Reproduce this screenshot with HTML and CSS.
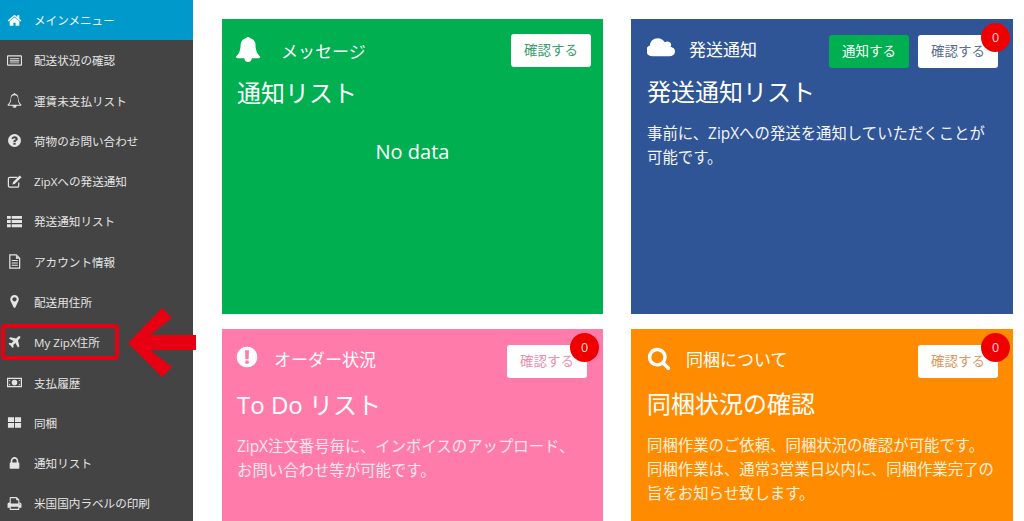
FILE: index.html
```html
<!DOCTYPE html>
<html lang="ja">
<head>
<meta charset="utf-8">
<title>ZipX</title>
<link rel="stylesheet" href="styles.css">
</head>
<body>
<div class="page">
<nav class="side">
  <a class="item active"><svg class="ic" viewBox="0 0 1792 1792"><path d="M1472 992v480q0 26-19 45t-45 19h-384v-384h-256v384h-384q-26 0-45-19t-19-45v-480q0-1 .5-3t.5-3l575-474 575 474q1 2 1 6zm223-69l-62 74q-8 9-21 11h-3q-13 0-21-7l-692-577-692 577q-12 8-24 7-13-2-21-11l-62-74q-8-10-7-23.500t11-21.500l719-599q32-26 76-26t76 26l244 204v-195q0-14 9-23t23-9h192q14 0 23 9t9 23v408l219 182q10 8 11 21.500t-7 23.500z"/></svg>メインメニュー</a>
  <a class="item"><svg class="ic" viewBox="0 0 16 16"><path fill-rule="evenodd" d="M1 2.500h14a1 1 0 0 1 1 1v9a1 1 0 0 1-1 1H1a1 1 0 0 1-1-1v-9a1 1 0 0 1 1-1zm.2 1.300v8.400h13.600V3.800zM3 5.500h10v1.200H3zM3 7.800h10V9H3zM3 10h10v1H3z"/></svg>配送状況の確認</a>
  <a class="item"><svg class="ic" viewBox="0 0 1792 1792"><path d="M912 1696q0-16-16-16-59 0-101.500-42.500t-42.500-101.500q0-16-16-16t-16 16q0 73 51.500 124.500t124.500 51.500q16 0 16-16zm-666-288h1300q-266-300-266-832 0-51-24-105t-69-103-121.500-80.500-169.500-31.500-169.500 31.500-121.500 80.500-69 103-24 105q0 532-266 832zm1482 0q0 52-38 90t-90 38h-448q0 106-75 181t-181 75-181-75-75-181h-448q-52 0-90-38t-38-90q190-161 287-397.500t97-498.500q0-165 96-262t264-117q-8-18-8-37 0-40 28-68t68-28 68 28 28 68q0 19-8 37 168 20 264 117t96 262q0 262 97 498.500t287 397.500z"/></svg>運賃未支払リスト</a>
  <a class="item"><svg class="ic" viewBox="0 0 1792 1792"><path d="M1024 1376v-192q0-14-9-23t-23-9h-192q-14 0-23 9t-9 23v192q0 14 9 23t23 9h192q14 0 23-9t9-23zm256-672q0-88-55.500-163t-138.500-116-170-41q-243 0-371 213-15 24 8 42l132 100q7 6 19 6 16 0 25-12 53-68 86-92 34-24 86-24 48 0 85.500 26t37.500 59q0 38-20 61t-68 45q-63 28-115.500 86.500t-52.500 125.500v36q0 14 9 23t23 9h192q14 0 23-9t9-23q0-19 21.500-49.500t54.500-49.500q32-18 49-28.500t46-35 44.500-48 28-60.500 12.500-81zm384 192q0 209-103 385.500t-279.500 279.500-385.500 103-385.500-103-279.500-279.500-103-385.500 103-385.500 279.500-279.500 385.500-103 385.500 103 279.500 279.500 103 385.500z"/></svg>荷物のお問い合わせ</a>
  <a class="item"><svg class="ic" viewBox="0 0 16 16"><path d="M11 3.500H3a1.500 1.500 0 0 0-1.500 1.500v7.500A1.500 1.500 0 0 0 3 14h8a1.500 1.500 0 0 0 1.500-1.500V9" fill="none" stroke="currentColor" stroke-width="1.300"/><path d="M13.500 1.500l2 2-7 7-2.800.800.800-2.800z"/></svg>ZipXへの発送通知</a>
  <a class="item"><svg class="ic" viewBox="0 0 16 16"><path d="M0 2h4v3H0zM5 2h11v3H5zM0 6.500h4v3H0zM5 6.500h11v3H5zM0 11h4v3H0zM5 11h11v3H5z"/></svg>発送通知リスト</a>
  <a class="item"><svg class="ic" viewBox="0 0 16 16"><path d="M3 1h7l3.500 3.500V15H3z" fill="none" stroke="currentColor" stroke-width="1.300"/><path d="M5 6.500h6.500v1H5zM5 9h6.500v1H5zM5 11.500h6.500v1H5zM9.500 1.500v3.500h3.500" fill="currentColor"/></svg>アカウント情報</a>
  <a class="item"><svg class="ic" viewBox="0 0 1792 1792"><path d="M1152 640q0-106-75-181t-181-75-181 75-75 181 75 181 181 75 181-75 75-181zm256 0q0 109-33 179l-364 774q-16 33-47.500 52t-67.500 19-67.500-19-46.500-52l-365-774q-33-70-33-179 0-212 150-362t362-150 362 150 150 362z"/></svg>配送用住所</a>
  <a class="item"><svg class="ic" viewBox="0 0 1408 1792"><path d="M1376 160q44 52 12 148t-108 172l-161 161 160 696q5 19-12 33l-128 96q-7 6-19 6-4 0-7-1-15-3-21-16l-279-508-259 259 53 194q5 17-8 31l-96 96q-9 9-23 9h-2q-15-2-24-13l-189-252-252-189q-11-7-13-23-1-13 9-25l96-97q9-9 23-9 6 0 8 1l194 53 259-259-508-279q-14-8-17-24-2-16 9-27l128-128q14-13 30-8l665 159 160-160q76-76 172-108t148 12z"/></svg>My ZipX住所</a>
  <a class="item"><svg class="ic" viewBox="0 0 16 16"><path fill-rule="evenodd" d="M0 3h16v10H0zm1.300 1.300v7.400h13.400V4.300zM8 5a3 3 0 1 1 0 6 3 3 0 0 1 0-6zM2.200 5.200h1.800L2.200 7zM13.800 5.200h-1.800L13.800 7zM2.200 10.800h1.800L2.200 9zM13.800 10.800h-1.800L13.800 9z"/></svg>支払履歴</a>
  <a class="item"><svg class="ic" viewBox="0 0 16 16"><path d="M1 2.500h6.500v5H1zM8.500 2.500H15v5H8.500zM1 8.500h6.500v5H1zM8.500 8.500H15v5H8.500z"/></svg>同梱</a>
  <a class="item"><svg class="ic" viewBox="0 0 1792 1792"><path d="M640 768h512v-192q0-106-75-181t-181-75-181 75-75 181v192zm832 96v576q0 40-28 68t-68 28h-960q-40 0-68-28t-28-68v-576q0-40 28-68t68-28h32v-192q0-184 132-316t316-132 316 132 132 316v192h32q40 0 68 28t28 68z"/></svg>通知リスト</a>
  <a class="item"><svg class="ic" viewBox="0 0 1792 1792"><path d="M448 1536h896v-256h-896v256zm0-640h896v-384h-160q-40 0-68-28t-28-68v-160h-640v640zm1152 64q0-26-19-45t-45-19-45 19-19 45 19 45 45 19 45-19 19-45zm128 0v416q0 13-9.500 22.500t-22.500 9.500h-224v160q0 40-28 68t-68 28h-960q-40 0-68-28t-28-68v-160h-224q-13 0-22.500-9.500t-9.500-22.500v-416q0-79 56.500-135.500t135.500-56.500h64v-544q0-40 28-68t68-28h672q40 0 88 20t76 48l152 152q28 28 48 76t20 88v256h64q79 0 135.500 56.500t56.500 135.500z"/></svg>米国国内ラベルの印刷</a>
</nav>
<main class="grid">
  <section class="card green">
    <header class="head">
      <svg class="big bell" viewBox="0 0 1792 1792"><path d="M1664 1344q0 52-38 90t-90 38h-448q0 106-75 181t-181 75-181-75-75-181h-448q-52 0-90-38t-38-90q50-42 91-88t85-119.500 74.500-158.500 50-206 19.500-260q0-152 117-282.500t307-158.500q-8-19-8-39 0-40 28-68t68-28 68 28 28 68q0 20-8 39 190 28 307 158.500t117 282.500q0 139 19.500 260t50 206 74.500 158.500 85 119.500 91 88z"/></svg>
      <span class="label l-msg">メッセージ</span>
      <div class="btns"><a class="btn t-green">確認する</a></div>
    </header>
    <h2 class="title t-msg">通知リスト</h2>
    <p class="nodata">No data</p>
  </section>
  <section class="card blue">
    <header class="head">
      <svg class="big cloud" viewBox="0 0 1920 1792" preserveAspectRatio="none"><path d="M1856 1280q0 159-112.500 271.500t-271.500 112.500h-1088q-185 0-316.500-131.500t-131.500-316.500q0-132 71-241.500t187-163.500q-2-28-2-43 0-212 150-362t362-150q158 0 286.500 88t187.500 230q70-62 166-62 106 0 181 75t75 181q0 75-41 138 129 30 213 134.500t84 239.500z"/></svg>
      <span class="label l-ship">発送通知</span>
      <div class="btns"><a class="btn solid">通知する</a><a class="btn t-blue">確認する<b class="badge">0</b></a></div>
    </header>
    <h2 class="title">発送通知リスト</h2>
    <p class="desc">事前に、ZipXへの発送を通知していただくことが<br>可能です。</p>
  </section>
  <section class="card pink">
    <header class="head">
      <svg class="big excl" viewBox="0 0 1792 1792"><path d="M896 128q209 0 385.500 103t279.500 279.500 103 385.500-103 385.500-279.500 279.500-385.500 103-385.500-103-279.500-279.500-103-385.500 103-385.500 279.500-279.500 385.500-103zm128 1247v-190q0-14-9-23.500t-22-9.500h-192q-13 0-23 10t-10 23v190q0 13 10 23t23 10h192q13 0 22-9.500t9-23.500zm-2-344l18-621q0-12-10-18-10-8-24-8h-220q-14 0-24 8-10 6-10 18l17 621q0 10 10 17.500t24 7.500h185q14 0 23.500-7.500t10.500-17.500z"/></svg>
      <span class="label l-order">オーダー状況</span>
      <div class="btns"><a class="btn t-pink">確認する<b class="badge">0</b></a></div>
    </header>
    <h2 class="title">To Do リスト</h2>
    <p class="desc">ZipX注文番号毎に、インボイスのアップロード、<br>お問い合わせ等が可能です。</p>
  </section>
  <section class="card orange">
    <header class="head">
      <svg class="big search" viewBox="0 0 1792 1792"><path d="M1216 832q0-185-131.500-316.500t-316.500-131.500-316.500 131.500-131.500 316.500 131.500 316.500 316.500 131.500 316.500-131.500 131.500-316.500zm512 832q0 52-38 90t-90 38q-54 0-90-38l-343-342q-179 124-399 124-143 0-273.500-55.500t-225-150-150-225-55.500-273.500 55.500-273.500 150-225 225-150 273.500-55.500 273.500 55.500 225 150 150 225 55.500 273.500q0 220-124 399l343 343q37 37 37 90z"/></svg>
      <span class="label l-bundle">同梱について</span>
      <div class="btns"><a class="btn t-orange">確認する<b class="badge">0</b></a></div>
    </header>
    <h2 class="title">同梱状況の確認</h2>
    <p class="desc">同梱作業のご依頼、同梱状況の確認が可能です。<br>同梱作業は、通常3営業日以内に、同梱作業完了の<br>旨をお知らせ致します。</p>
  </section>
</main>
</div>
<div class="mark"></div>
<svg class="arrow" viewBox="0 0 68 70"><path d="M0 35L34 0l10 10-22 17h46v15H22l22 17-10 10z"/></svg>
</body>
</html>
```
FILE: styles.css
```css
* { box-sizing: border-box; }
html, body { margin: 0; height: 100%; overflow: hidden; background: #fff; }
body { font-family: "Open Sans", "Noto Sans CJK JP", sans-serif; color: #fff; position: relative; }
.page { display: flex; height: 521px; overflow: hidden; }

.side { width: 193px; flex: none; background: #444; display: flex; flex-direction: column; }
.item { height: 40.28px; flex: none; display: flex; align-items: center; gap: 12px; padding-left: 7px; font-size: 11.6px; color: #e4e4e4; }
.item.active { background: #0099cc; color: #f2fafd; }
.ic { width: 15px; height: 15px; flex: none; fill: currentColor; }

.grid { flex: 1; display: grid; grid-template-columns: 381px 382px; grid-template-rows: 295px 295px; column-gap: 28px; row-gap: 15px; padding: 19px 0 0 29px; align-content: start; }
.card { padding: 15px; min-width: 0; }
.green { background: #00b050; padding-right: 12px; }
.blue { background: #2f5597; padding-top: 16px; padding-left: 16px; }
.pink { background: #ff7caa; padding: 16px 16px 0 15px; }
.orange { background: #ff8c00; padding-top: 16px; padding-left: 16px; }

.head { display: flex; align-items: flex-start; height: 33px; }
.big { flex: none; fill: #fff; }
.bell { width: 26px; height: 26px; margin: 3px 1px 0 -1px; }
.cloud { width: 29px; height: 23px; margin-top: 0; }
.excl { width: 24px; height: 24px; margin: 0 0 0 -2px; }
.search { width: 24px; height: 24px; margin-top: 1px; }
.label { font-size: 17px; line-height: 24px; }
.l-msg { margin: 6px 0 0 18px; }
.l-ship { margin: 3px 0 0 13px; }
.l-order { margin: 3px 0 0 15px; }
.l-bundle { margin: 3px 0 0 15px; }

.btns { margin-left: auto; display: flex; gap: 9px; }
.btn { position: relative; display: block; width: 80px; height: 33px; line-height: 32px; text-align: center; font-size: 13.500px; background: #fff; border-radius: 3px; }
.solid { background: #00b050; color: #fff; }
.t-green { color: #3b9d6b; }
.t-blue { color: #5b6f93; }
.t-pink { color: #e98fae; }
.t-orange { color: #d99a5f; }
.badge { position: absolute; top: -12px; right: -12px; width: 29px; height: 29px; border-radius: 50%; background: #ee0000; color: #ffd9d0; font-size: 12.500px; font-weight: 400; line-height: 29px; text-align: center; }

.title { margin: 9px 0 0; font-size: 24px; font-weight: 400; line-height: 33px; }
.blue .title { margin-top: 7px; }
.pink .title { margin-top: 10px; }
.orange .title { margin-top: 9px; }
.desc { margin: 14px 0 0; font-size: 15.400px; line-height: 24px; }
.blue .desc { color: #f2f4f9; }
.pink .desc { color: #ffe6ee; }
.orange .desc { color: #fff0dd; }
.nodata { margin: 29px 0 0; font-size: 20px; line-height: 28px; text-align: center; padding-right: 3px; }

.mark { position: absolute; left: 1px; top: 324px; width: 118px; height: 36px; border: 4px solid #e60012; border-radius: 4px; }
.arrow { position: absolute; left: 128px; top: 308px; width: 68px; height: 70px; fill: #e60012; }
```
